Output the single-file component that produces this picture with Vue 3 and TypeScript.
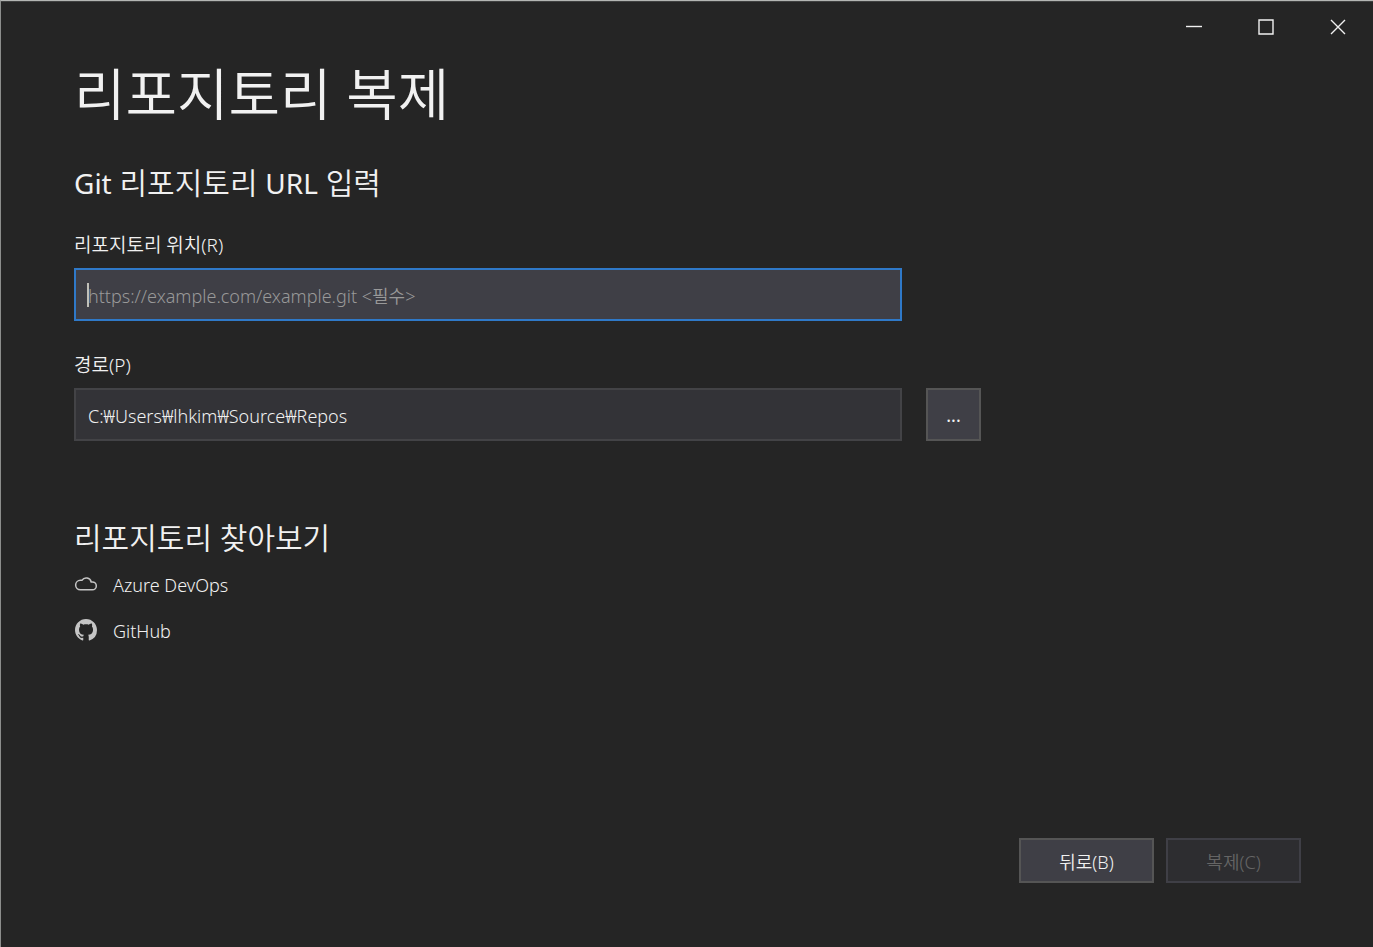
<script setup lang="ts">
import { ref } from 'vue'

const repositoryUrl = ref<string>('')
const localPath = ref<string>('C:₩Users₩lhkim₩Source₩Repos')
</script>

<template>
  <div class="window">
    <header class="caption">
      <button class="caption-button" type="button" aria-label="최소화">
        <svg viewBox="0 0 16 16" width="16" height="16"><path d="M0 7.5H16" /></svg>
      </button>
      <button class="caption-button" type="button" aria-label="최대화">
        <svg viewBox="0 0 16 16" width="16" height="16"><path d="M1 1H15V15H1Z" /></svg>
      </button>
      <button class="caption-button" type="button" aria-label="닫기">
        <svg viewBox="0 0 16 16" width="16" height="16"><path d="M1 1L15 15M15 1L1 15" /></svg>
      </button>
    </header>

    <main class="content">
      <h1 class="title">리포지토리 복제</h1>

      <form class="form" @submit.prevent>
        <h2 class="heading"><span class="latin">Git</span> 리포지토리 <span class="latin">URL</span> 입력</h2>

        <label class="label" for="repo-url">리포지토리 위치(R)</label>
        <div class="row">
          <div class="field">
            <input
              id="repo-url"
              v-model="repositoryUrl"
              class="input active"
              type="text"
              placeholder="https://example.com/example.git &lt;필수&gt;"
            />
            <span v-if="!repositoryUrl" class="caret" aria-hidden="true"></span>
          </div>
          <span class="spacer"></span>
        </div>

        <label class="label" for="repo-path">경로(P)</label>
        <div class="row">
          <div class="field">
            <input id="repo-path" v-model="localPath" class="input" type="text" />
          </div>
          <button class="browse" type="button" aria-label="찾아보기">...</button>
        </div>
      </form>

      <section class="sources">
        <h2 class="heading">리포지토리 찾아보기</h2>
        <nav class="source-list">
          <a class="source" href="#azure">
            <svg class="icon" viewBox="0 0 24 24" width="24" height="24" aria-hidden="true">
              <path
                class="outline"
                d="M6.4 17.8H18.4A3.9 3.9 0 0 0 18.4 10H17.2A5.1 5.1 0 0 0 7.9 8.3H6.4A4.75 4.75 0 0 0 6.4 17.8Z"
              />
            </svg>
            <span>Azure DevOps</span>
          </a>
          <a class="source" href="#github">
            <svg class="icon" viewBox="0 0 24 24" width="24" height="24" aria-hidden="true">
              <path
                class="solid"
                transform="translate(1 1) scale(1.375)"
                d="M8 0C3.58 0 0 3.58 0 8c0 3.54 2.29 6.53 5.47 7.59.4.07.55-.17.55-.38 0-.19-.01-.82-.01-1.49-2.01.37-2.53-.49-2.69-.94-.09-.23-.48-.94-.82-1.13-.28-.15-.68-.52-.01-.53.63-.01 1.08.58 1.23.82.72 1.21 1.87.87 2.33.66.07-.52.28-.87.51-1.07-1.78-.2-3.64-.89-3.64-3.95 0-.87.31-1.59.82-2.15-.08-.2-.36-1.02.08-2.12 0 0 .67-.21 2.2.82.64-.18 1.32-.27 2-.27s1.36.09 2 .27c1.53-1.04 2.2-.82 2.2-.82.44 1.1.16 1.92.08 2.12.51.56.82 1.27.82 2.15 0 3.07-1.87 3.75-3.65 3.95.29.25.54.73.54 1.48 0 1.07-.01 1.93-.01 2.2 0 .21.15.46.55.38A8.01 8.01 0 0 0 16 8c0-4.42-3.58-8-8-8z"
              />
            </svg>
            <span>GitHub</span>
          </a>
        </nav>
      </section>
    </main>

    <footer class="footer">
      <button class="action" type="button">뒤로(B)</button>
      <button class="action" type="button" disabled>복제(C)</button>
    </footer>
  </div>
</template>

<style>
body {
  background: #252526;
}
</style>

<style scoped>
.window {
  box-sizing: border-box;
  min-height: 100vh;
  display: flex;
  flex-direction: column;
  background: #252525;
  border-top: 1px solid #b4b6b4;
  border-left: 1px solid #8c8e8c;
  box-shadow: inset 0 1px #404141;
  color: #f1f1f1;
  font-family: "Noto Sans", "Noto Sans CJK KR", sans-serif;
  font-size: 18px;
  font-weight: 350;
}

button,
input {
  box-sizing: border-box;
  margin: 0;
  font: inherit;
  color: inherit;
}

.caption {
  display: flex;
  justify-content: flex-end;
  margin-right: -1px;
}

.caption-button {
  display: flex;
  align-items: center;
  justify-content: center;
  width: 72px;
  height: 52px;
  padding: 0;
  background: none;
  border: 0;
}

.caption-button svg {
  fill: none;
  stroke: #f1f1f1;
  stroke-width: 1.4;
}

.content {
  flex: 1;
  padding: 0 73px;
}

.title {
  margin: 0;
  font-size: 56px;
  font-weight: 350;
  line-height: 80px;
}

.heading {
  margin: 0;
  font-size: 30px;
  font-weight: 350;
  line-height: 40px;
}

.latin {
  font-size: 28px;
  font-weight: 400;
}

.form {
  max-width: 907px;
  padding-top: 30px;
}

.label {
  display: block;
  padding-top: 28px;
  font-size: 19px;
  line-height: 28px;
}

.row {
  display: flex;
  gap: 24px;
  padding: 9px 0 2px;
}

.field {
  position: relative;
  flex: 1;
}

.input {
  display: block;
  width: 100%;
  height: 53px;
  padding: 2px 12px 0;
  background: #333337;
  border: 2px solid #434346;
  border-radius: 0;
  outline: 0;
}

.input.active {
  background: #3f3f46;
  border-color: #2f79c8;
}

.input::placeholder {
  color: #999999;
  opacity: 1;
}

.caret {
  position: absolute;
  top: 15px;
  left: 13px;
  width: 2px;
  height: 24px;
  background: #c0c0b9;
}

.spacer,
.browse {
  width: 55px;
}

.browse {
  height: 53px;
  padding: 0;
  background: #3f3f46;
  border: 2px solid #555555;
  font-weight: 400;
}

.sources {
  padding-top: 75px;
}

.source-list {
  padding-top: 4px;
}

.source {
  display: flex;
  align-items: center;
  gap: 15px;
  width: max-content;
  height: 46px;
  color: inherit;
  text-decoration: none;
}

.icon {
  margin-bottom: 2px;
}

.outline {
  fill: none;
  stroke: #c5c5c5;
  stroke-width: 1.5;
}

.solid {
  fill: #c5c5c5;
}

.footer {
  display: flex;
  justify-content: flex-end;
  gap: 12px;
  padding: 0 72px 64px;
}

.action {
  width: 135px;
  height: 45px;
  padding: 0;
  background: #3f3f46;
  border: 2px solid #555555;
}

.action:disabled {
  background: #2d2d30;
  border-color: #3f3f46;
  color: #656565;
}
</style>
